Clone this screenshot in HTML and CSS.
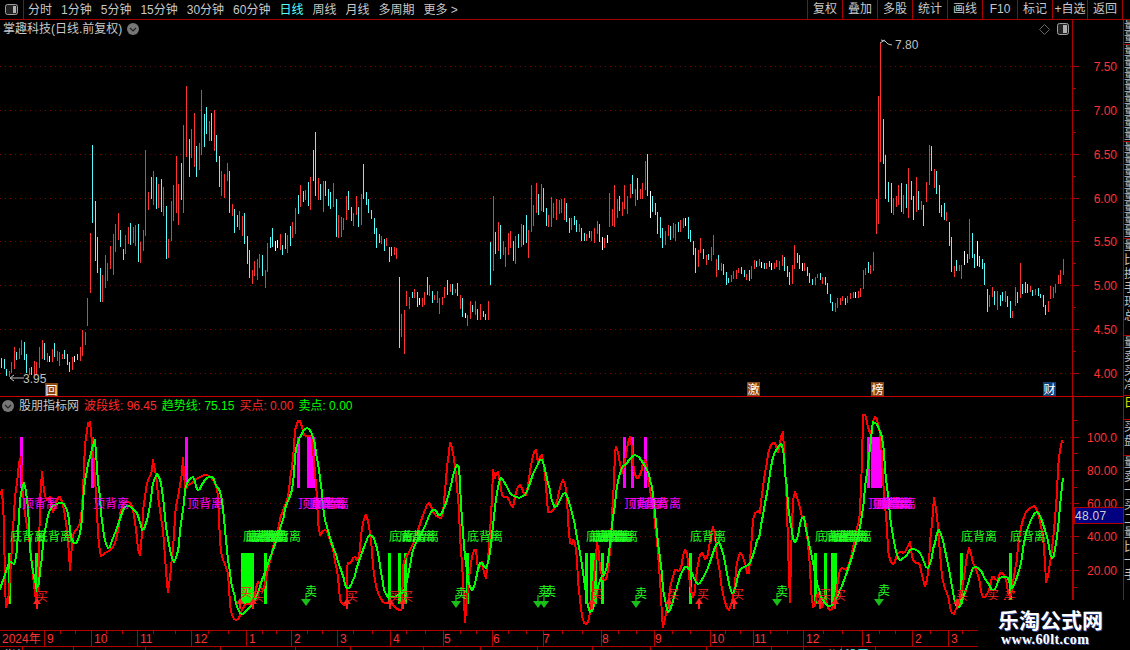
FILE: index.html
```html
<!DOCTYPE html>
<html lang="zh">
<head>
<meta charset="utf-8">
<title>掌趣科技 日线</title>
<link rel="stylesheet" href="styles.css">
</head>
<body>
<div class="app">
  <header class="toolbar">
    <div class="panel-toggle">
      <svg width="13" height="11" viewBox="0 0 13 11"><rect x=".5" y=".5" width="12" height="10" rx="2" class="ico-frame"/><rect x="8" y="2" width="3" height="7" class="ico-fill"/></svg>
    </div>
    <nav class="periods">
      <span>分时</span><span>1分钟</span><span>5分钟</span><span>15分钟</span><span>30分钟</span><span>60分钟</span><span class="active">日线</span><span>周线</span><span>月线</span><span>多周期</span><span>更多 &gt;</span>
    </nav>
    <nav class="actions">
      <span>复权</span><span>叠加</span><span>多股</span><span>统计</span><span>画线</span><span>F10</span><span>标记</span><span>+自选</span><span>返回</span>
    </nav>
  </header>

  <main class="body">
    <div class="charts">
      <section class="pane pane-price">
        <div class="pane-title">
          <span class="name">掌趣科技(日线.前复权)</span>
          <svg class="round" width="12" height="12" viewBox="0 0 12 12"><circle cx="6" cy="6" r="6" class="round-bg"/><path d="M3 5l3 3 3-3" class="round-chev"/></svg>
          <span class="title-tools">
            <svg width="11" height="11" viewBox="0 0 11 11"><path d="M5.5.5l5 5-5 5-5-5z" class="ico-diamond"/></svg>
            <svg width="12" height="12" viewBox="0 0 12 12"><rect x=".5" y=".5" width="11" height="11" rx="2" class="ico-frame"/><rect x="6" y="2" width="4" height="8" class="ico-fill"/></svg>
          </span>
        </div>
        <svg class="plot" width="1123" height="358" viewBox="0 38 1123 358">
          <path class="grid" d="M0 66.5H1072M0 110.5H1072M0 154.5H1072M0 198.5H1072M0 241.5H1072M0 285.5H1072M0 329.5H1072M0 373.5H1072"/>
          <g transform="translate(.5 0)" class="candles">
            <path class="k-red" d="M9 371V377M11 362V373M14 347V369M19 348V359M21 340V355M29 368V375M34 361V375M36 362V374M39 347V368M42 340V359M47 353V362M52 349V362M57 351V361M59 352V366M62 354V359M72 357V370M80 347V361M82 330V356M85 332V345M87 298V326M90 233V293M102 275V302M105 255V288M107 263V281M110 246V269M113 234V275M115 224V252M118 213V240M125 235V254M128 227V244M133 227V243M135 225V246M140 242V263M143 230V251M145 150V236M148 192V210M153 171V205M158 184V208M163 187V216M168 239V258M171 201V241M173 185V221M176 156V213M178 184V225M183 125V213M186 86V157M191 129V158M194 113V167M199 143V170M201 90V155M209 121V141M214 110V151M221 171V196M224 174V198M227 163V181M232 204V216M239 211V230M242 216V236M252 270V284M254 261V276M257 259V280M259 254V268M265 270V288M267 243V272M280 234V250M287 235V253M292 222V238M295 208V234M300 185V207M305 190V200M310 177V210M318 178V200M323 181V212M333 183V207M338 215V238M341 217V237M343 218V230M346 196V220M353 213V226M356 196V215M361 194V225M381 236V244M386 238V246M394 247V255M396 248V259M401 314V337M404 310V354M406 291V306M409 297V309M414 289V298M422 298V307M424 292V305M429 285V296M434 295V300M437 291V303M439 298V314M442 297V305M444 287V298M450 284V292M455 289V293M460 295V309M467 315V326M470 301V319M475 301V315M480 304V320M488 301V320M493 196V271M498 222V251M503 241V255M505 247V267M508 233V255M510 231V248M515 236V264M521 224V247M528 230V258M531 185V232M533 205V226M536 183V213M541 184V211M548 215V227M551 197V227M553 203V218M556 199V220M559 200V214M561 199V213M564 198V220M571 218V230M579 224V232M586 234V241M591 231V241M594 228V243M597 221V234M604 238V248M609 193V227M612 209V226M614 185V227M617 199V218M622 202V216M624 185V209M627 196V214M630 184V198M635 189V206M640 189V199M642 183V199M645 161V190M665 231V245M668 225V236M673 223V238M675 224V241M680 220V232M683 218V228M698 250V267M700 238V253M706 255V265M711 247V261M713 235V255M716 259V277M721 263V271M731 275V282M733 271V279M736 270V279M738 268V273M746 274V280M751 266V279M754 260V269M759 259V266M766 263V269M774 263V269M776 260V267M779 261V270M782 255V266M792 265V284M794 245V269M804 263V271M815 277V285M817 274V278M822 277V284M835 303V312M837 298V308M840 298V305M842 296V301M847 296V303M850 293V299M853 292V298M858 291V298M860 288V297M863 270V289M865 268V275M870 265V274M873 252V271M876 199V234M878 96V224M880 43V162M893 198V215M896 196V207M898 185V205M903 195V214M908 168V218M916 177V212M921 201V210M926 182V202M929 145V185M934 169V188M946 212V221M954 266V277M959 265V271M961 265V279M969 219V259M989 295V307M992 287V297M997 291V310M1005 291V302M1012 311V318M1015 287V306M1020 263V298M1030 286V292M1035 289V295M1048 301V312M1050 286V299M1053 287V298M1055 284V293M1058 275V284M1060 270V284M1063 259V275"/>
            <path class="k-cyan" d="M1 358V368M4 359V369M6 369V376M16 352V360M24 342V360M26 354V373M31 367V375M44 343V360M54 343V357M64 350V359M67 354V365M69 362V372M77 354V360M92 145V223M95 201V261M97 237V273M100 268V302M120 230V247M123 249V260M130 223V245M138 224V262M151 177V199M156 177V209M161 179V212M166 206V259M181 163V200M189 139V177M196 146V177M204 114V147M206 107V134M211 113V141M216 135V162M219 156V187M229 171V213M234 209V233M237 215V227M244 213V244M247 236V264M249 250V278M262 255V276M270 237V248M272 228V247M282 245V255M285 233V249M290 226V246M298 195V214M303 191V202M308 182V206M313 150V181M315 132V196M320 184V200M325 181V196M328 189V206M330 192V209M336 199V237M348 191V210M351 207V221M358 207V227M363 164V199M366 192V205M368 199V213M371 210V219M374 218V234M376 228V248M379 234V243M384 239V251M389 247V262M391 247V256M399 277V348M412 292V298M417 292V307M427 277V295M432 291V303M447 280V295M452 284V295M457 283V296M462 298V317M472 305V312M477 309V320M483 311V317M485 314V320M490 242V285M495 232V254M500 225V259M513 241V261M518 234V248M523 225V245M526 215V243M538 194V215M543 188V212M546 208V226M566 203V222M569 218V233M574 216V225M576 220V232M581 228V241M584 233V241M589 231V238M599 224V242M619 196V211M632 175V194M637 178V200M647 154V196M652 196V212M655 203V215M657 212V234M660 217V238M662 228V248M670 226V240M678 222V232M688 217V239M690 230V242M693 241V255M695 248V273M703 249V259M708 254V260M718 255V270M723 264V275M726 272V285M728 278V283M741 267V274M744 270V277M749 270V281M756 261V267M764 263V269M769 261V267M784 257V271M787 266V277M789 272V285M797 253V263M799 255V269M807 267V276M809 273V283M812 279V285M820 273V280M825 277V285M827 283V294M830 294V303M832 302V311M845 298V305M868 262V273M883 119V164M885 155V199M888 182V202M891 183V213M901 183V212M906 184V208M911 181V200M913 196V220M918 191V210M923 205V226M931 146V171M936 171V194M939 185V213M941 205V217M944 203V220M949 222V246M951 237V272M956 260V271M967 254V263M972 233V258M974 254V268M979 256V267M982 259V269M984 263V285M987 289V312M994 291V305M1000 295V306M1002 292V301M1007 296V307M1010 301V318M1017 292V303M1022 284V294M1025 282V293M1027 284V293M1032 290V296M1038 288V296M1040 294V298M1043 295V307M1045 305V315"/>
            <path class="k-white" d="M49 356V362M74 356V362M275 241V251M277 240V248M419 298V305M465 313V318M602 237V250M607 235V243M650 191V218M685 218V226M761 262V268M771 263V270M802 263V271M855 292V298M964 251V265M977 241V266"/>
          </g>
          <path class="note-line" d="M880 43l5-3M881 40l4 1 3 3 4 1M10 378h14M10 378l4-3M10 378l4 3"/>
          <text x="895" y="49" class="note">7.80</text>
          <text x="23" y="383" class="note">3.95</text>

          <path class="axis-line" d="M1072.5 38V396"/>
          <path class="axis-line" d="M1073 66.5h6M1073 110.5h6M1073 154.5h6M1073 198.5h6M1073 241.5h6M1073 285.5h6M1073 329.5h6M1073 373.5h6M1073 88.5h3M1073 132.5h3M1073 176.5h3M1073 220.5h3M1073 263.5h3M1073 307.5h3M1073 351.5h3"/>
          <g class="axis-text">
            <text x="1117" y="71">7.50</text><text x="1117" y="115">7.00</text><text x="1117" y="159">6.50</text><text x="1117" y="203">6.00</text><text x="1117" y="246">5.50</text><text x="1117" y="290">5.00</text><text x="1117" y="334">4.50</text><text x="1117" y="378">4.00</text>
          </g>
          <g class="event">
            <rect x="45" y="383" width="13" height="13" class="ev-brown"/><text x="51.5" y="394.5">回</text>
            <rect x="747" y="382" width="13" height="14" class="ev-brown"/><text x="753.5" y="393.5">激</text>
            <rect x="871" y="382" width="13" height="14" class="ev-brown"/><text x="877.5" y="393.5">榜</text>
            <rect x="1043" y="382" width="13" height="14" class="ev-blue"/><text x="1049.5" y="393.5">财</text>
          </g>
        </svg>
      </section>

      <section class="pane pane-ind">
        <div class="pane-title pane-title-ind">
          <svg class="round" width="12" height="12" viewBox="0 0 12 12"><circle cx="6" cy="6" r="6" class="round-bg"/><path d="M3 5l3 3 3-3" class="round-chev"/></svg>
          <span class="name">股朋指标网</span>
          <span class="red">波段线: 96.45</span>
          <span class="green">趋势线: 75.15</span>
          <span class="red">买点: 0.00</span>
          <span class="green">卖点: 0.00</span>
        </div>
        <svg class="plot" width="1123" height="236" viewBox="0 414 1123 236">
          <defs>
            <g id="up"><path d="M0-4L4 2H1V7H-1V2H-4z"/></g>
            <g id="down"><path d="M-.6-7H.6V-1H5L0 6-5-1H-.6z"/></g>
          </defs>
          <path class="grid" d="M0 437.5H1072M0 470.5H1072M0 503.5H1072M0 536.5H1072M0 570.5H1072"/>

          <path class="bar-m" d="M20 437h3v51h-3zM91 437h3v51h-3zM185 437h3v51h-3zM297 437h3v51h-3zM307 437h8v51h-8zM623 437h3v51h-3zM631 437h3v51h-3zM644 437h3v51h-3zM867 437h3v51h-3zM871 437h11v51h-11z"/>
          <path class="bar-g" d="M8 553h3v51h-3zM35 553h3v51h-3zM241 553h13v51h-13zM264 553h3v51h-3zM388 553h3v51h-3zM398 553h3v51h-3zM404 553h3v51h-3zM466 553h3v51h-3zM585 553h3v51h-3zM590 553h7v51h-7zM601 553h3v51h-3zM689 553h3v51h-3zM814 553h3v51h-3zM824 553h3v51h-3zM831 553h6v51h-6zM960 553h3v51h-3zM1009 553h3v51h-3z"/>

          <polyline class="line-red smooth" points="0,495 2,490 4,523 5,587 6,607 8,603 10,577 12,547 14,513 15,497 17,483 19,463 21,457 23,490 26,520 30,545 34,585 37,605 39,555 40,500 42,472 44,490 47,500 50,497 53,512 57,500 60,497 63,505 67,530 70,570 73,535 80,523 83,490 85,445 88,423 90,422 93,450 97,510 100,552 105,553 115,543 122,507 128,502 133,510 138,550 140,555 143,510 145,497 147,483 152,470 153,460 155,470 158,497 160,510 163,530 167,583 168,592 172,557 175,517 178,497 182,473 183,458 185,487 188,485 200,477 207,475 213,480 218,497 220,540 223,560 228,573 230,603 233,617 238,619 245,605 253,603 258,582 263,590 267,573 273,547 282,513 287,500 292,467 295,430 300,421 304,435 312,437 313,450 317,497 318,523 320,535 325,530 330,540 337,570 340,600 347,602 347,567 350,563 355,557 358,560 363,523 366,515 370,533 373,567 377,590 383,602 390,603 402,608 403,567 410,550 417,533 423,515 429,503 433,512 438,517 443,513 447,467 450,443 453,453 457,487 462,563 465,622 468,587 472,557 476,550 478,570 482,562 486,578 490,533 493,470 495,478 498,472 502,495 507,497 513,507 515,497 520,485 526,495 532,460 536,450 538,463 542,455 547,500 548,512 555,507 563,480 567,497 570,543 575,543 580,600 584,623 590,613 597,543 600,570 607,577 612,517 615,452 618,452 622,473 626,455 630,437 635,475 640,475 645,460 650,490 657,540 662,617 663,627 667,607 672,580 675,570 680,570 685,550 688,563 693,597 700,555 707,558 713,527 718,563 727,608 733,597 738,558 742,555 749,573 753,520 758,511 760,513 765,473 770,447 775,443 778,452 783,432 785,467 788,547 790,602 793,500 798,500 802,517 806,525 810,567 813,607 818,593 822,607 825,600 830,610 835,600 840,570 848,567 857,527 860,510 863,417 866,418 870,433 875,417 880,433 883,480 887,527 888,550 893,564 898,553 905,552 910,542 913,560 920,565 924,583 927,580 932,523 934,498 938,527 942,577 947,593 952,613 957,607 963,583 969,548 973,563 978,575 983,597 990,587 992,577 997,580 1000,573 1005,577 1010,597 1015,570 1022,523 1030,508 1037,510 1043,537 1046,582 1048,577 1053,540 1060,450 1063,443"/>
          <polyline class="line-green smooth" points="0,590 5,575 9,563 12,563 15,562 18,533 20,500 22,488 24,483 27,500 28,507 30,547 37,587 40,570 45,530 50,510 55,505 62,503 67,510 72,540 78,540 82,520 85,480 90,457 95,440 97,467 100,497 103,527 108,548 115,533 125,507 137,513 142,530 147,520 152,490 153,483 157,474 161,483 163,497 165,517 172,558 177,555 182,517 185,490 187,483 193,477 198,490 205,480 212,477 217,487 222,500 228,560 233,590 240,613 247,610 255,600 263,577 273,550 282,523 287,503 292,490 295,457 300,437 307,428 313,437 318,463 322,493 325,520 333,547 340,567 347,588 353,580 362,553 370,535 377,548 383,583 388,597 402,593 407,580 413,550 423,530 433,510 440,515 447,500 457,465 460,483 465,557 472,590 480,563 488,563 498,487 503,480 512,495 525,495 535,470 542,460 548,483 555,507 565,493 573,517 580,553 590,612 600,580 607,567 613,517 620,473 627,463 635,455 643,463 652,487 658,543 665,600 670,610 683,570 690,570 698,584 707,570 717,544 722,550 732,593 740,570 750,563 757,540 760,533 767,493 773,457 782,445 785,473 790,520 795,542 802,518 805,523 812,557 818,587 825,603 832,605 840,590 850,563 860,527 867,473 872,428 875,423 882,437 887,487 892,530 898,558 905,557 912,549 920,553 928,568 935,543 939,530 947,560 957,607 967,587 973,568 980,570 993,590 1000,578 1008,578 1012,588 1020,567 1027,530 1037,512 1045,530 1052,558 1057,537 1063,478"/>

          <g class="ink-m">
            <text x="22" y="508">顶背离</text><text x="93" y="508">顶背离</text><text x="187" y="508">顶背离</text><text x="298" y="508">顶背离</text><text x="308" y="508">顶背离</text><text x="310" y="508">顶背离</text><text x="313" y="508">顶背离</text><text x="624" y="508">顶背离</text><text x="632" y="508">顶背离</text><text x="645" y="508">顶背离</text><text x="868" y="508">顶背离</text><text x="872" y="508">顶背离</text><text x="875" y="508">顶背离</text><text x="877" y="508">顶背离</text><text x="880" y="508">顶背离</text>
          </g>
          <g class="ink-g">
            <text x="10" y="541">底背离</text><text x="36" y="541">底背离</text><text x="243" y="541">底背离</text><text x="246" y="541">底背离</text><text x="248" y="541">底背离</text><text x="251" y="541">底背离</text><text x="253" y="541">底背离</text><text x="265" y="541">底背离</text><text x="389" y="541">底背离</text><text x="399" y="541">底背离</text><text x="403" y="541">底背离</text><text x="467" y="541">底背离</text><text x="586" y="541">底背离</text><text x="590" y="541">底背离</text><text x="592" y="541">底背离</text><text x="595" y="541">底背离</text><text x="597" y="541">底背离</text><text x="602" y="541">底背离</text><text x="690" y="541">底背离</text><text x="815" y="541">底背离</text><text x="825" y="541">底背离</text><text x="831" y="541">底背离</text><text x="833" y="541">底背离</text><text x="836" y="541">底背离</text><text x="961" y="541">底背离</text><text x="1010" y="541">底背离</text>
          </g>
          <g class="ink-r">
            <use href="#up" x="37" y="602"/><use href="#up" x="240" y="602"/><use href="#up" x="253" y="602"/><use href="#up" x="347" y="602"/><use href="#up" x="390" y="602"/><use href="#up" x="403" y="602"/><use href="#up" x="592" y="602"/><use href="#up" x="669" y="602"/><use href="#up" x="699" y="602"/><use href="#up" x="734" y="602"/><use href="#up" x="820" y="602"/><use href="#up" x="835" y="602"/><use href="#up" x="957" y="602"/><use href="#up" x="1005" y="602"/>
            <text x="36" y="601">买</text><text x="240" y="597">买</text><text x="252" y="601">买</text><text x="346" y="601">买</text><text x="389" y="601">买</text><text x="401" y="601">买</text><text x="591" y="599">买</text><text x="667" y="599">买</text><text x="697" y="599">买</text><text x="732" y="599">买</text><text x="819" y="599">买</text><text x="834" y="600">买</text><text x="956" y="600">买</text><text x="987" y="600">买</text><text x="1004" y="601">买</text>
          </g>
          <g class="arrow-g">
            <use href="#down" x="306" y="600"/><use href="#down" x="456" y="602"/><use href="#down" x="538" y="602"/><use href="#down" x="544" y="602"/><use href="#down" x="636" y="602"/><use href="#down" x="777" y="600"/><use href="#down" x="879" y="600"/>
          </g>
          <g class="ink-g">
            <text x="305" y="596">卖</text><text x="455" y="598">卖</text><text x="538" y="596">卖</text><text x="544" y="596">卖</text><text x="635" y="598">卖</text><text x="776" y="596">卖</text><text x="878" y="595">卖</text>
          </g>

          <path class="axis-thick" d="M1073 414V630"/>
          <path class="axis-line" d="M1074 437.5h5M1074 470.5h5M1074 503.5h5M1074 536.5h5M1074 570.5h5M1074 420.5h3M1074 453.5h3M1074 487.5h3M1074 520.5h3M1074 553.5h3M1074 587.5h3"/>
          <g class="axis-text">
            <text x="1117" y="442">100.0</text><text x="1117" y="475">80.00</text><text x="1117" y="508">60.00</text><text x="1117" y="541">40.00</text><text x="1117" y="575">20.00</text>
          </g>
          <rect x="1074" y="507.5" width="49" height="16" class="cursor-box"/>
          <text x="1075" y="520" class="cursor-text">48.07</text>

          <path class="axis-line" d="M0 630.5H978M0 646.5H978M44.5 630V646M91.5 630V646M137.5 630V646M191.5 630V646M246.5 630V646M291.5 630V646M337.5 630V646M390.5 630V646M443.5 630V646M492.5 630V646M543.5 630V646M601.5 630V646M654.5 630V646M710.5 630V646M753.5 630V646M803.5 630V646M862.5 630V646M912.5 630V646M948.5 630V646"/>
          <path class="axis-line" d="M60 631v3M75 631v3M106 631v3M122 631v3M153 631v3M175 631v3M208 631v3M228 631v3M262 631v3M276 631v3M307 631v3M322 631v3M353 631v3M372 631v3M406 631v3M425 631v3M460 631v3M476 631v3M508 631v3M526 631v3M562 631v3M582 631v3M618 631v3M636 631v3M672 631v3M690 631v3M725 631v3M740 631v3M770 631v3M787 631v3M823 631v3M842 631v3M879 631v3M895 631v3M930 631v3M962 631v3M22 647v3M73 647v3M145 647v3M220 647v3M295 647v3M350 647v3M423 647v3M480 647v3M537 647v3M592 647v3M650 647v3M706 647v3M771 647v3M803 647v3M841 647v3M875 647v3"/>
          <g class="date-text">
            <text x="2" y="643">2024年</text><text x="47" y="643">9</text><text x="94" y="643">10</text><text x="140" y="643">11</text><text x="194" y="643">12</text><text x="249" y="643">1</text><text x="294" y="643">2</text><text x="340" y="643">3</text><text x="393" y="643">4</text><text x="444" y="643">5</text><text x="493" y="643">6</text><text x="543" y="643">7</text><text x="602" y="643">8</text><text x="655" y="643">9</text><text x="711" y="643">10</text><text x="754" y="643">11</text><text x="806" y="643">12</text><text x="865" y="643">1</text><text x="915" y="643">2</text><text x="951" y="643">3</text>
          </g>
          <text x="4" y="660" class="clip-text">指标</text>
          <text x="826" y="660" class="clip-text">分析</text>
          <text x="845" y="660" class="clip-cyan">设置</text>
        </svg>
      </section>
    </div>

    <aside class="strip">
      <div class="strip-cell s-25 dense">量<br>量</div>
      <div class="strip-cell s-97 dense">量<br>量<br>量<br>量<br>量<br>量<br>量<br>量</div>
      <div class="strip-cell s-97 dense">量<br>量<br>量<br>量<br>量<br>量<br>量<br>量</div>
      <div class="strip-cell s-97">量<br>比<br>换<br>手<br>现<br>总</div>
      <div class="strip-cell s-60">量<br>卖<br>买<br>净</div>
      <div class="strip-cell s-24 yellow">日</div>
      <div class="strip-cell s-36">买<br>盘</div>
      <div class="strip-cell s-rest">量<br>卖<br>一<br>买<br>二<br>量<br>比<br>一<br>手</div>
    </aside>
  </main>

  <div class="watermark">
    <strong>乐淘公式网</strong>
    <em>www.60lt.com</em>
  </div>
</div>
<script src="chart.js"></script>
</body>
</html>
```

FILE: chart.js
```js
// Indicator lines are stored as key points; resample them per bar with a Catmull-Rom spline.
document.querySelectorAll('polyline.smooth').forEach(function (line) {
  var p = line.getAttribute('points').trim().split(/\s+/).map(function (s) {
    return s.split(',').map(Number);
  });
  var out = [];
  for (var i = 0; i < p.length - 1; i++) {
    var a = p[Math.max(i - 1, 0)], b = p[i], c = p[i + 1], d = p[Math.min(i + 2, p.length - 1)];
    var n = Math.max(1, Math.ceil((c[0] - b[0]) / 2));
    for (var k = 0; k < n; k++) {
      var t = k / n, t2 = t * t, t3 = t2 * t;
      var x = 0.5 * (2 * b[0] + (c[0] - a[0]) * t + (2 * a[0] - 5 * b[0] + 4 * c[0] - d[0]) * t2 + (3 * b[0] - a[0] - 3 * c[0] + d[0]) * t3);
      var y = 0.5 * (2 * b[1] + (c[1] - a[1]) * t + (2 * a[1] - 5 * b[1] + 4 * c[1] - d[1]) * t2 + (3 * b[1] - a[1] - 3 * c[1] + d[1]) * t3);
      out.push(Math.round(x) + ',' + Math.round(y));
    }
  }
  var last = p[p.length - 1];
  out.push(last[0] + ',' + last[1]);
  line.setAttribute('points', out.join(' '));
});
```

FILE: styles.css
```css
* { box-sizing: border-box; }
html, body { margin: 0; padding: 0; background: #000; }
.app {
  position: relative;
  width: 1130px;
  height: 650px;
  overflow: hidden;
  display: flex;
  flex-direction: column;
  background: #000;
  color: #c8c8c8;
  font: 12px/16px "Liberation Sans", "Noto Sans CJK SC", sans-serif;
}

/* toolbar */
.toolbar {
  flex: none;
  height: 20px;
  display: flex;
  align-items: stretch;
  border-bottom: 1px solid #a80000;
}
.panel-toggle {
  width: 24px;
  display: flex;
  align-items: center;
  padding-left: 5px;
  border-right: 1px solid #a80000;
}
.ico-frame { fill: #222; stroke: #a0a0a0; }
.ico-fill { fill: #b0b0b0; }
.ico-diamond { fill: none; stroke: #666; }
.periods { display: flex; gap: 9px; align-items: center; padding-left: 4px; }
.periods span { white-space: nowrap; }
.periods .active { color: #54ffff; }
.actions { display: flex; margin-left: auto; margin-right: 7px; border-left: 1px solid #a80000; }
.actions span {
  width: 35px;
  text-align: center;
  line-height: 19px;
  border-right: 1px solid #a80000;
  white-space: nowrap;
}

/* body */
.body { flex: 1; display: flex; min-height: 0; }
.charts { width: 1123px; flex: none; display: flex; flex-direction: column; }
.pane-price { height: 377px; border-bottom: 1px solid #c80000; }
.pane-ind { height: 253px; }
.pane { display: flex; flex-direction: column; }
.plot { display: block; flex: none; }

.pane-title {
  height: 18px;
  width: 1073px;
  display: flex;
  align-items: center;
  gap: 5px;
  padding-left: 3px;
  padding-right: 3px;
  border-right: 1px solid #a80000;
  white-space: nowrap;
}
.pane-title-ind { height: 17px; padding-left: 2px; border-right-width: 2px; width: 1074px; }
.pane-title .name { color: #c8c8c8; }
.title-tools { margin-left: auto; display: flex; align-items: center; gap: 7px; }
.round-bg { fill: #777; }
.round-chev { fill: none; stroke: #222; stroke-width: 1.2; }
.red { color: #ff2a2a; }
.green { color: #00ff00; }

/* svg chart parts */
.grid { fill: none; stroke: #800000; stroke-width: 1; stroke-dasharray: 1 4; shape-rendering: crispEdges; }
.candles path { fill: none; stroke-width: 1; shape-rendering: crispEdges; }
.k-red { stroke: #ff3232; }
.k-cyan { stroke: #54fcfc; }
.k-white { stroke: #ffffff; }
.axis-line { fill: none; stroke: #b00000; stroke-width: 1; shape-rendering: crispEdges; }
.axis-thick { fill: none; stroke: #b00000; stroke-width: 2; shape-rendering: crispEdges; }
.note-line { fill: none; stroke: #c0c0c0; stroke-width: 1; }
svg text { font-family: "Liberation Sans", "Noto Sans CJK SC", sans-serif; font-size: 12px; }
.note { fill: #c0c0c0; }
.axis-text text { fill: #ff3232; text-anchor: end; }
.date-text text { fill: #ff3232; }
.event text { fill: #fff; text-anchor: middle; font-size: 12px; }
.ev-brown { fill: #8a4510; }
.ev-blue { fill: #0f3f78; }
.bar-m { fill: #ff00ff; }
.bar-g { fill: #00ff00; }
.line-red { fill: none; stroke: #ff0000; stroke-width: 2; stroke-linejoin: round; shape-rendering: crispEdges; }
.line-green { fill: none; stroke: #00ff00; stroke-width: 2; stroke-linejoin: round; shape-rendering: crispEdges; }
.ink-m text { fill: #ff00ff; }
.ink-g text { fill: #20ff20; }
.ink-r { fill: #ff2020; }
.ink-r text { fill: #ff2020; }
.arrow-g { fill: #18c018; }
.cursor-box { fill: #000080; stroke: #b00000; shape-rendering: crispEdges; }
.cursor-text { fill: #d0d0d0; letter-spacing: .3px; }
.clip-text { fill: #d0d0d0; }
.clip-cyan { fill: #54fcfc; }

/* right strip */
.strip {
  width: 7px;
  flex: none;
  height: 580px;
  overflow: hidden;
  border-left: 1px solid #b00000;
  color: #c0c0c0;
  line-height: 14px;
}
.strip-cell { overflow: hidden; white-space: nowrap; border-bottom: 1px solid #b00000; }
.dense { line-height: 12px; }
.s-25 { height: 25px; }
.s-97 { height: 97px; }
.s-60 { height: 60px; }
.s-24 { height: 24px; }
.s-36 { height: 36px; }
.s-rest { border-bottom: 0; height: 144px; }
.yellow { color: #e8e800; }

/* watermark */
.watermark {
  position: absolute;
  left: 978px;
  top: 600px;
  width: 152px;
  height: 50px;
  background: #000;
  display: flex;
  flex-direction: column;
  align-items: flex-start;
  padding: 6px 0 0 20px;
  color: #fff;
}
.watermark strong {
  font-size: 21px;
  line-height: 26px;
  font-weight: 700;
  font-family: "Noto Sans CJK SC", sans-serif;
  text-shadow: 1px 1px 0 #2a3f8f;
  white-space: nowrap;
}
.watermark em {
  font: 700 14px/16px "Liberation Serif", serif;
  padding-left: 3px;
  letter-spacing: .35px;
  text-shadow: 1px 1px 0 #2a3f8f;
}
```
